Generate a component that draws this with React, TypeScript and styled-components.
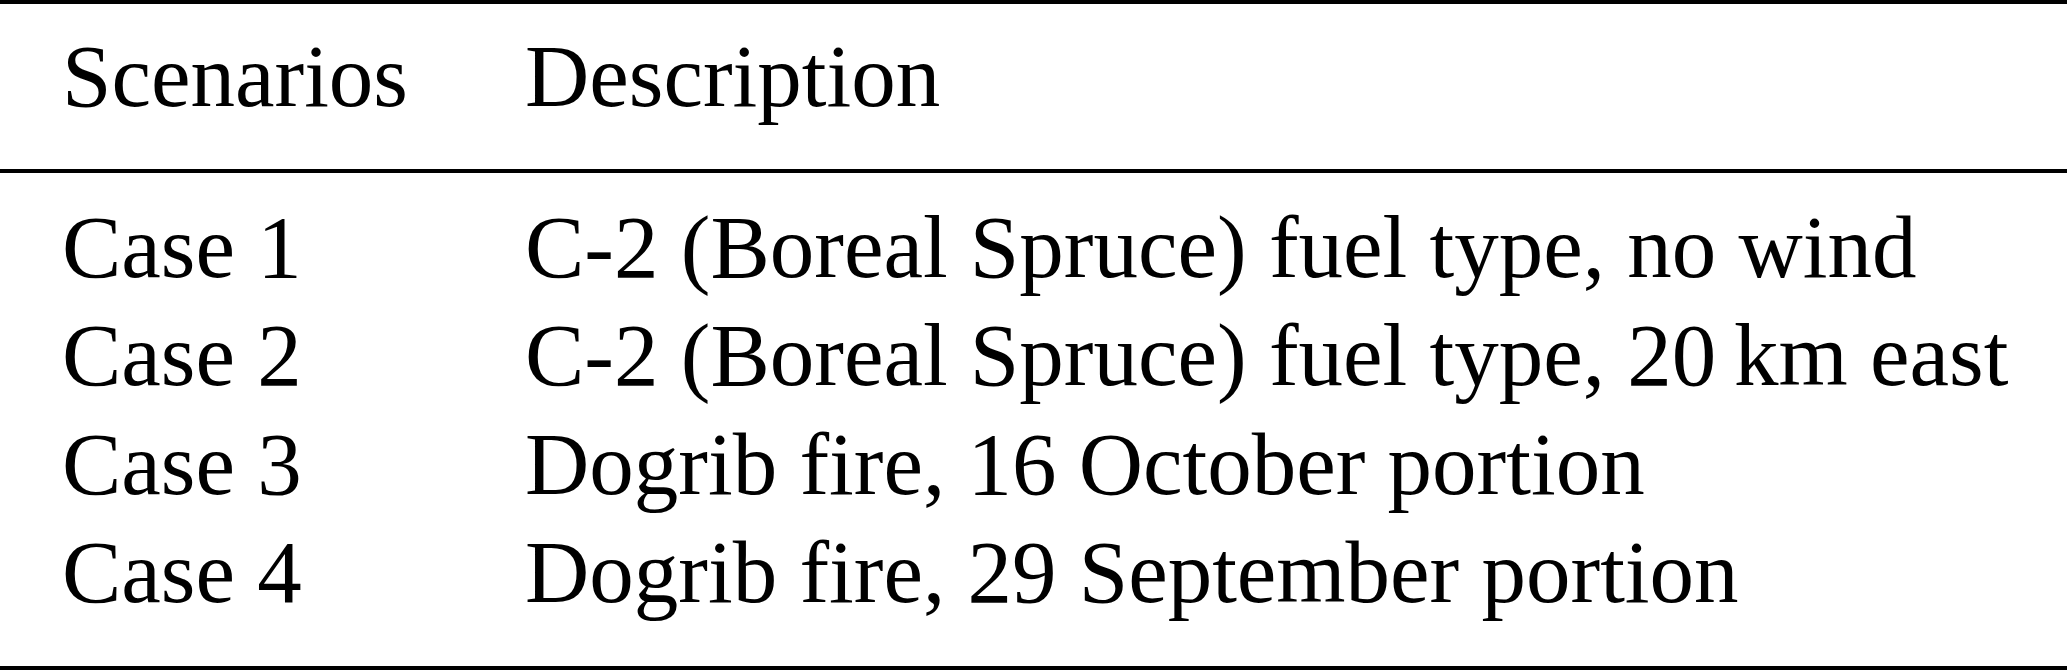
import React from 'react'
import styled, { createGlobalStyle } from 'styled-components'

const GlobalStyle = createGlobalStyle`
  html, body {
    margin: 0;
    padding: 0;
    background: #fff;
  }
`

const rows = [
  { name: 'Case 1', text: 'C-2 (Boreal Spruce) fuel type, no wind' },
  { name: 'Case 2', text: 'C-2 (Boreal Spruce) fuel type, 20\u2009km east' },
  { name: 'Case 3', text: 'Dogrib fire, 16 October portion' },
  { name: 'Case 4', text: 'Dogrib fire, 29 September portion' },
]

const App = () => {
  return (
    <>
      <GlobalStyle />
      <Table>
        <Head>
          <Row>
            <Cell>Scenarios</Cell>
            <Cell>Description</Cell>
          </Row>
        </Head>
        <Body>
          {rows.map((r) => (
            <Row key={r.name}>
              <Cell>{r.name}</Cell>
              <Cell>{r.text}</Cell>
            </Row>
          ))}
        </Body>
      </Table>
    </>
  )
}

export default App

const Table = styled.div`
  width: 2067px;
  border-top: 4px solid #000;
  border-bottom: 4px solid #000;
  font-family: 'Liberation Serif', 'Times New Roman', serif;
  font-size: 89px;
  line-height: 108.5px;
  color: #000;
`

const Head = styled.div`
  padding: 18px 0 38px;
  border-bottom: 4px solid #000;
`

const Body = styled.div`
  padding: 20px 0 39px;
`

const Row = styled.div`
  display: grid;
  grid-template-columns: 463px 1fr;
  padding-left: 62px;
  white-space: nowrap;
`

const Cell = styled.div`
  text-align: left;
`
